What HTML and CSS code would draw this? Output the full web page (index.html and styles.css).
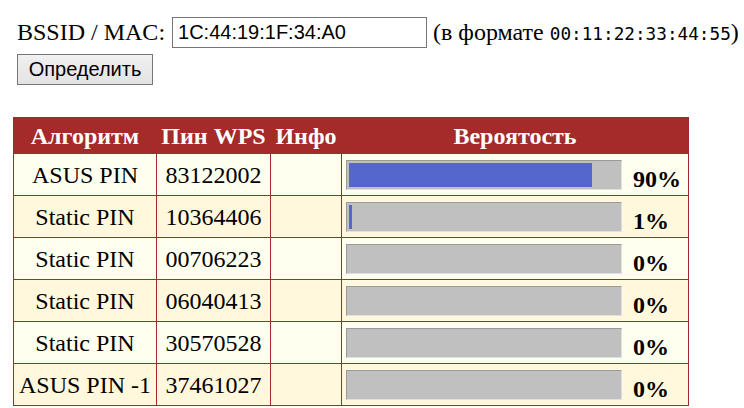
FILE: index.html
```
<!DOCTYPE html>
<html>
<head>
<meta charset="utf-8">
<link rel="stylesheet" href="styles.css">
</head>
<body>
<form class="form">
  <div class="line">
    <label class="label">BSSID / MAC:</label>
    <input class="mac" type="text" value="1C:44:19:1F:34:A0">
    <span class="hint">(в формате <code class="code">00:11:22:33:44:55</code>)</span>
  </div>
  <button class="btn" type="button">Определить</button>
</form>
<table class="pins">
  <thead>
    <tr>
      <th class="c-alg">Алгоритм</th>
      <th class="c-pin">Пин WPS</th>
      <th class="c-info">Инфо</th>
      <th class="c-prob">Вероятость</th>
    </tr>
  </thead>
  <tbody>
    <tr>
      <td>ASUS PIN</td><td>83122002</td><td></td>
      <td class="prob"><div class="cell"><div class="bar"><div class="fill" style="width:90%"></div></div><span class="pct">90%</span></div></td>
    </tr>
    <tr>
      <td>Static PIN</td><td>10364406</td><td></td>
      <td class="prob"><div class="cell"><div class="bar"><div class="fill" style="width:1%"></div></div><span class="pct">1%</span></div></td>
    </tr>
    <tr>
      <td>Static PIN</td><td>00706223</td><td></td>
      <td class="prob"><div class="cell"><div class="bar"><div class="fill" style="width:0%"></div></div><span class="pct">0%</span></div></td>
    </tr>
    <tr>
      <td>Static PIN</td><td>06040413</td><td></td>
      <td class="prob"><div class="cell"><div class="bar"><div class="fill" style="width:0%"></div></div><span class="pct">0%</span></div></td>
    </tr>
    <tr>
      <td>Static PIN</td><td>30570528</td><td></td>
      <td class="prob"><div class="cell"><div class="bar"><div class="fill" style="width:0%"></div></div><span class="pct">0%</span></div></td>
    </tr>
    <tr>
      <td>ASUS PIN -1</td><td>37461027</td><td></td>
      <td class="prob"><div class="cell"><div class="bar"><div class="fill" style="width:0%"></div></div><span class="pct">0%</span></div></td>
    </tr>
  </tbody>
</table>
</body>
</html>
```

FILE: styles.css
```
html, body {
  margin: 0;
  padding: 0;
  background: #ffffff;
}
body {
  font-family: "Liberation Serif", "Times New Roman", serif;
  font-size: 24px;
  color: #000;
}
.form {
  margin: 0;
  padding: 17px 0 0 17px;
}
.line {
  display: flex;
  align-items: center;
  height: 31px;
}
.label {
  margin-right: 7px;
}
.mac {
  box-sizing: border-box;
  width: 255px;
  height: 31px;
  margin: 0 6px 0 0;
  padding: 0 5px;
  border: 1px solid #767676;
  border-radius: 0;
  font-family: "Liberation Sans", Arial, sans-serif;
  font-size: 20px;
  color: #000;
  outline: none;
}
.hint {
  white-space: nowrap;
}
.code {
  font-family: "DejaVu Sans Mono", monospace;
  font-size: 17.7px;
}
.btn {
  display: block;
  box-sizing: border-box;
  width: 136px;
  height: 31px;
  margin-top: 6px;
  padding: 0;
  border: 1px solid #767676;
  border-radius: 0;
  background: linear-gradient(#f0f0f0, #e3e3e3);
  font-family: "Liberation Sans", Arial, sans-serif;
  font-size: 20px;
  color: #000;
}
.pins {
  margin: 32px 0 0 13px;
  border-collapse: collapse;
  border: 1px solid #a52a2a;
}
.pins th {
  background: #a52a2a;
  color: #fff;
  font-weight: bold;
  height: 35px;
  padding: 0;
  text-align: center;
  border: 1px solid #a52a2a;
  line-height: 1;
}
.c-alg { width: 142px; }
.c-pin { width: 113px; }
.c-info { width: 70px; }
.c-prob { width: 346px; }
.pins td {
  height: 41px;
  padding: 0;
  text-align: center;
  border: 1px solid #a52a2a;
  line-height: 1;
}
.pins tbody tr:nth-child(odd) td { background: #fffff0; }
.pins tbody tr:nth-child(even) td { background: #fff8dc; }
.pins td.prob {
  text-align: left;
}
.cell {
  display: flex;
  align-items: center;
  padding-left: 4px;
}
.bar {
  box-sizing: border-box;
  width: 276px;
  height: 30px;
  padding: 2px;
  border: 1px solid;
  border-color: #9a9a9a #e0e0e0 #e0e0e0 #9a9a9a;
  background: #c0c0c0;
}
.fill {
  height: 100%;
  background: #5566cc;
}
.pct {
  margin-left: 11px;
  margin-top: 8px;
  font-weight: bold;
}
```
